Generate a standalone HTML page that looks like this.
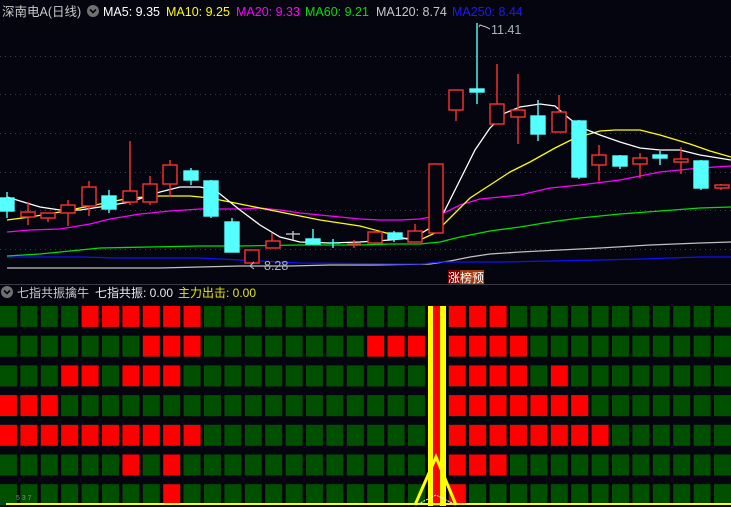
<!DOCTYPE html>
<html><head><meta charset="utf-8"><style>
html,body{margin:0;padding:0;background:#05050f;width:731px;height:507px;overflow:hidden}
svg{display:block}
text{font-family:"Liberation Sans","Noto Sans CJK SC",sans-serif}
</style></head><body>
<svg width="731" height="507" viewBox="0 0 731 507" xmlns="http://www.w3.org/2000/svg">
<defs>
<pattern id="g" patternUnits="userSpaceOnUse" x="0" y="306" width="20.4" height="29.7"><rect x="0" y="0" width="17" height="21" fill="#005000"/></pattern>
<pattern id="r" patternUnits="userSpaceOnUse" x="0" y="306" width="20.4" height="29.7"><rect x="0" y="0" width="17" height="21" fill="#ff0000"/></pattern>
</defs>
<rect width="731" height="507" fill="#05050f"/>
<g stroke="#3a3a4a" stroke-dasharray="1 4" stroke-width="1">
<line x1="0" y1="56.5" x2="731" y2="56.5"/><line x1="0" y1="94.5" x2="731" y2="94.5"/>
<line x1="0" y1="133.5" x2="731" y2="133.5"/><line x1="0" y1="172.5" x2="731" y2="172.5"/>
<line x1="0" y1="210.5" x2="731" y2="210.5"/><line x1="0" y1="249.5" x2="731" y2="249.5"/>
</g>
<line x1="0" y1="284.5" x2="731" y2="284.5" stroke="#3c3c44" stroke-width="1"/>
<text x="2" y="16" font-size="12.5" fill="#c8c8c8">深南电A(日线)</text>
<circle cx="93" cy="11" r="6" fill="#707070"/><path d="M90 9.5 L93 12.5 L96 9.5" stroke="#05050f" stroke-width="1.6" fill="none"/>
<text x="103" y="16" font-size="12.5" fill="#ffffff">MA5: 9.35</text>
<text x="166" y="16" font-size="12.5" fill="#ffff00">MA10: 9.25</text>
<text x="236" y="16" font-size="12.5" fill="#ff00ff">MA20: 9.33</text>
<text x="305" y="16" font-size="12.5" fill="#00e000">MA60: 9.21</text>
<text x="376" y="16" font-size="12.5" fill="#c8c8c8">MA120: 8.74</text>
<text x="452" y="16" font-size="12.5" fill="#1a1aff">MA250: 8.44</text>
<g fill="none" stroke-width="1.3">
<polyline stroke="#c0c0c0" points="7,268 160,268 240,266 290,266 330,265 370,265 430,264 450,261 470,257 490,254 520,252 560,250 600,248 650,245 700,243 731,242"/>
<polyline stroke="#1010ff" points="7,257 80,257 120,258 200,258 260,261 300,263 400,264 420,264 440,262 500,262 600,260 640,259 700,257 731,257"/>
<polyline stroke="#00e000" points="7,256 40,254 70,251 100,248 150,247 200,246 240,246 300,245 360,245 390,244 420,244 440,242 460,237 490,231 520,227 550,222 580,218 620,214 660,211 700,208 731,207"/>
<polyline stroke="#ff00ff" points="7,232 30,230 60,229 90,224 110,219 140,214 170,211 200,209 240,209 260,208 280,210 300,213 330,216 360,219 380,220 400,220 420,219 440,215 460,205 480,199 500,197 520,195 550,188 580,185 620,180 660,172 700,168 731,166"/>
<polyline stroke="#ffff00" points="7,220 30,217 60,212 80,208 100,204 130,198 160,196 190,196 210,198 230,202 260,208 290,214 320,220 360,226 390,234 410,240 420,240 435,233 450,218 470,198 490,185 510,172 530,162 555,148 575,138 600,131 615,130 640,130 660,135 690,144 710,151 731,157"/>
<polyline stroke="#ffffff" points="7,197 20,201 40,207 60,210 80,210 100,207 130,202 160,192 180,187 200,187 215,190 240,210 260,225 280,237 300,242 330,243 360,242 390,240 410,238 420,234 435,225 445,210 460,180 475,150 490,128 505,113 520,107 540,104 555,106 565,115 580,127 600,135 620,142 640,148 660,150 680,150 700,155 731,160"/>
</g>
<g stroke-width="1.4">
<g stroke="#ff3030" fill="#05050f">
<line x1="28" y1="202" x2="28" y2="225"/><rect x="21" y="212" width="14" height="5"/>
<line x1="48" y1="213" x2="48" y2="222"/><rect x="41" y="213" width="14" height="5"/>
<line x1="68" y1="200" x2="68" y2="226"/><rect x="61" y="205" width="14" height="8"/>
<line x1="89" y1="181" x2="89" y2="216"/><rect x="82" y="187" width="14" height="19"/>
<line x1="130" y1="141" x2="130" y2="205"/><rect x="123" y="191" width="14" height="11"/>
<line x1="150" y1="176" x2="150" y2="205"/><rect x="143" y="184" width="14" height="18"/>
<line x1="170" y1="160" x2="170" y2="197"/><rect x="163" y="165" width="14" height="19"/>
<rect x="245" y="250" width="14" height="13"/>
<line x1="272" y1="233" x2="272" y2="241"/><rect x="266" y="241" width="14" height="7"/>
<line x1="354" y1="240" x2="354" y2="248"/><line x1="347" y1="244" x2="361" y2="244"/>
<line x1="375" y1="230" x2="375" y2="244"/><rect x="368" y="232" width="14" height="11"/>
<line x1="415" y1="224" x2="415" y2="242"/><rect x="408" y="231" width="14" height="11"/>
<rect x="429" y="164" width="14" height="69"/>
<line x1="456" y1="110" x2="456" y2="121"/><rect x="449" y="90" width="14" height="20"/>
<line x1="497" y1="64" x2="497" y2="104"/><rect x="490" y="104" width="14" height="20"/>
<line x1="518" y1="74" x2="518" y2="144"/><rect x="511" y="110" width="14" height="7"/>
<line x1="559" y1="95" x2="559" y2="112"/><rect x="552" y="112" width="14" height="20"/>
<line x1="599" y1="145" x2="599" y2="181"/><rect x="592" y="155" width="14" height="10"/>
<line x1="640" y1="153" x2="640" y2="178"/><rect x="633" y="158" width="14" height="6"/>
<line x1="681" y1="147" x2="681" y2="174"/><rect x="674" y="159" width="14" height="3"/>
<line x1="721" y1="184" x2="721" y2="190"/><rect x="715" y="185" width="14" height="3"/>
</g>
<g stroke="#55ffff" fill="#55ffff">
<line x1="7" y1="192" x2="7" y2="218"/><rect x="0" y="198" width="14" height="13"/>
<line x1="109" y1="190" x2="109" y2="213"/><rect x="102" y="196" width="14" height="13"/>
<line x1="191" y1="168" x2="191" y2="185"/><rect x="184" y="171" width="14" height="9"/>
<line x1="211" y1="180" x2="211" y2="218"/><rect x="204" y="181" width="14" height="35"/>
<line x1="232" y1="218" x2="232" y2="252"/><rect x="225" y="222" width="14" height="30"/>
<line x1="313" y1="229" x2="313" y2="244"/><rect x="306" y="239" width="14" height="5"/>
<line x1="333" y1="239" x2="333" y2="248"/><line x1="327" y1="243" x2="340" y2="243"/>
<line x1="394" y1="231" x2="394" y2="242"/><rect x="388" y="233" width="14" height="6"/>
<line x1="477" y1="23" x2="477" y2="104"/><rect x="470" y="89" width="14" height="3"/>
<line x1="538" y1="100" x2="538" y2="141"/><rect x="531" y="116" width="14" height="18"/>
<line x1="579" y1="120" x2="579" y2="179"/><rect x="572" y="121" width="14" height="56"/>
<line x1="620" y1="155" x2="620" y2="169"/><rect x="613" y="156" width="14" height="10"/>
<line x1="660" y1="151" x2="660" y2="165"/><rect x="653" y="155" width="14" height="3"/>
<line x1="701" y1="160" x2="701" y2="190"/><rect x="694" y="161" width="14" height="27"/>
</g>
<g stroke="#c0c0c0"><line x1="293" y1="231" x2="293" y2="240"/><line x1="286" y1="234" x2="300" y2="234"/></g>
</g>
<path d="M479 27 L480 25 L486 27 L490 29" stroke="#c0c0c0" fill="none" stroke-width="1"/>
<text x="491" y="34" font-size="12.5" fill="#a8b4c4">11.41</text>
<path d="M254 262 L250 266 L254 269" stroke="#c0c0c0" fill="none" stroke-width="1"/>
<text x="264" y="270" font-size="12.5" fill="#a8b4c4">8.28</text>
<rect x="448" y="270" width="12" height="14" fill="#800000"/><rect x="460" y="270" width="24" height="14" fill="#a03a10"/>
<text x="448" y="282" font-size="12" fill="#ffffff" font-family="Noto Sans CJK SC,sans-serif">涨榜预</text>
<circle cx="7" cy="292" r="6" fill="#707070"/><path d="M4 290.5 L7 293.5 L10 290.5" stroke="#05050f" stroke-width="1.6" fill="none"/>
<text x="17" y="297" font-size="12" fill="#c8c8c8">七指共振擒牛</text>
<text x="95" y="297" font-size="12" fill="#e8e8e8">七指共振: 0.00</text>
<text x="178" y="297" font-size="12" fill="#e8e800">主力出击: 0.00</text>
<rect x="0" y="306" width="731" height="199" fill="url(#g)"/>
<g fill="url(#r)">
<rect x="81.6" y="306" width="122.4" height="21"/><rect x="448.8" y="306" width="61.2" height="21"/>
<rect x="142.8" y="335.7" width="61.2" height="21"/><rect x="367.2" y="335.7" width="61.2" height="21"/><rect x="448.8" y="335.7" width="81.6" height="21"/>
<rect x="61.2" y="365.4" width="40.8" height="21"/><rect x="122.4" y="365.4" width="61.2" height="21"/><rect x="448.8" y="365.4" width="81.6" height="21"/><rect x="550.8" y="365.4" width="20.4" height="21"/>
<rect x="0" y="395.1" width="61.2" height="21"/><rect x="448.8" y="395.1" width="142.8" height="21"/>
<rect x="0" y="424.8" width="204" height="21"/><rect x="448.8" y="424.8" width="163.2" height="21"/>
<rect x="122.4" y="454.5" width="20.4" height="21"/><rect x="163.2" y="454.5" width="20.4" height="21"/><rect x="448.8" y="454.5" width="61.2" height="21"/>
<rect x="163.2" y="484.2" width="20.4" height="21"/><rect x="448.8" y="484.2" width="20.4" height="21"/>
</g>
<rect x="426" y="306" width="22" height="200" fill="#05050f"/>
<rect x="428" y="306" width="18" height="200" fill="#ffff00"/>
<rect x="433" y="306" width="7" height="200" fill="#ff0000"/>
<polyline points="415,505 436,457 456,505" fill="none" stroke="#ffff00" stroke-width="3"/>
<polyline points="418,504 436,495 454,504" fill="none" stroke="#ffffff" stroke-width="1" stroke-dasharray="2 1"/>
<rect x="6" y="503" width="725" height="2" fill="#ffff00"/>
<text x="16" y="500" font-size="7" fill="#888">5  3  7</text>
</svg>
</body></html>
